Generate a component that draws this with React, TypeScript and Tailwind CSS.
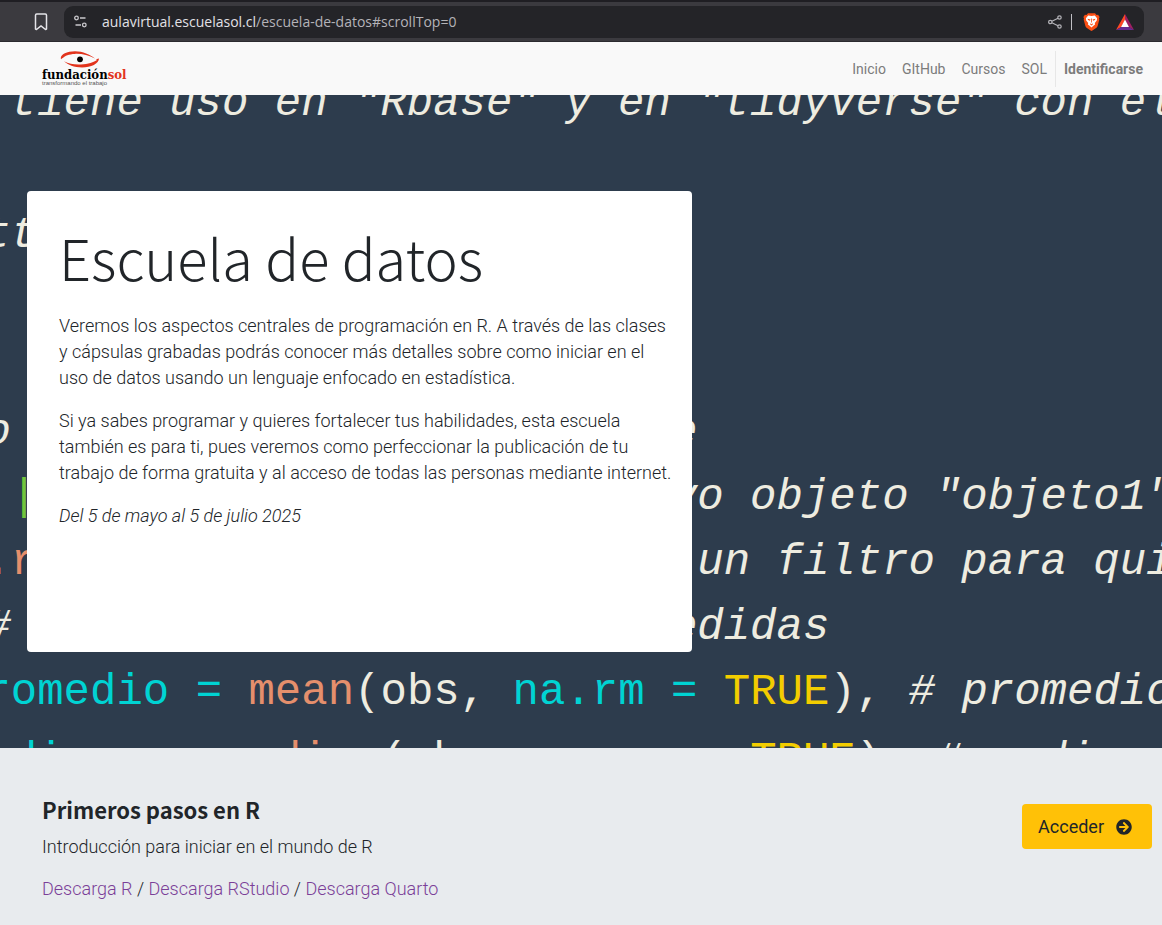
import type { ReactNode } from "react";
import { FaArrowCircleRight } from "react-icons/fa";

const navLinks = ["Inicio", "GItHub", "Cursos", "SOL"];

const downloads = ["Descarga R", "Descarga RStudio", "Descarga Quarto"];

function BrowserBar() {
  return (
    <div className="flex h-[42px] items-center border-t-2 border-b border-t-[#1f1e23] border-b-[#2b2a2f] bg-[#3b3a3f] pr-[18px] pl-[34px]">
      <button type="button" aria-label="Guardar marcador" className="mr-4 text-[#e4e3e8]">
        <svg width="14" height="18" viewBox="0 0 14 18" fill="none" stroke="currentColor" strokeWidth="1.5" strokeLinejoin="round">
          <path d="M1.5 2.2c0-.7.5-1.2 1.200-1.200h8.600c.7 0 1.200.5 1.200 1.200v13.800l-1 .5-4.500-3.600-4.500 3.600-1-.5z" />
        </svg>
      </button>
      <div className="flex h-8 min-w-0 flex-1 items-center rounded-[9px] bg-[#242428] px-[10px]">
        <button type="button" aria-label="Información del sitio" className="mr-[15px] text-[#c9c8cc]">
          <svg width="13" height="13" viewBox="0 0 13 13" fill="none" stroke="currentColor" strokeWidth="1.300">
            <circle cx="2.500" cy="3" r="1.800" />
            <path d="M6 3h5.500M1.500 10h5.500" />
            <circle cx="10.300" cy="10" r="1.800" />
          </svg>
        </button>
        <p className="min-w-0 flex-1 truncate font-['Open_Sans',sans-serif] text-[14px] leading-5 text-[#b4b3b8]">
          <span className="text-[#e2e1e6]">aulavirtual.escuelasol.cl</span>
          /escuela-de-datos#scrollTop=0
        </p>
        <button type="button" aria-label="Compartir" className="text-[#b4b3b8]">
          <svg width="14" height="14" viewBox="0 0 14 14" fill="none" stroke="currentColor" strokeWidth="1.200">
            <circle cx="2.300" cy="7" r="1.700" />
            <circle cx="11.500" cy="2.500" r="1.700" />
            <circle cx="11.500" cy="11.500" r="1.700" />
            <path d="M3.900 6.300 10 3.200M3.900 7.700l6.100 3.100" />
          </svg>
        </button>
        <span className="mx-[9px] h-4 w-px bg-[#c0bfc4]" />
        <button type="button" aria-label="Brave Shields" className="mx-[2px]">
          <svg width="17" height="18" viewBox="0 0 17 18">
            <path
              d="M5 .3h7l1.600 1.600 1.500-.1 1.500 2.200-.6 1.500.3 1.300-1.700 6.300c-.3 1-.8 1.500-1.500 2l-3.700 2.500c-.6.4-1.200.4-1.800 0l-3.700-2.500c-.7-.5-1.200-1-1.500-2L.7 6.800 1 5.500.4 4l1.500-2.200 1.500.1z"
              fill="#fb4f14"
            />
            <path
              d="M5.200 2.600 8.500 3l3.300-.4 2.300 2.600-.3 2.300-2 2.600.3 1.500-2 1.300-1.600 1.600-1.600-1.600-2-1.300.3-1.500-2-2.600-.3-2.300z"
              fill="#fff"
            />
            <path d="m4.600 5.800 2.900.7-.7 1.200-1.800-.8zM12.400 5.800l-2.900.7.7 1.200 1.800-.8zM7 10.300l1.500.9 1.500-.9-.4 1.500-1.100.7-1.100-.7zM8.100 5.500h.8v4h-.8z" fill="#fb4f14" />
          </svg>
        </button>
        <button type="button" aria-label="Brave Rewards" className="ml-[14px]">
          <svg width="18" height="16" viewBox="0 0 18 16">
            <path d="M9 0 0 16l5.200-3L9 6z" fill="#ff4724" />
            <path d="m9 0 9 16-5.200-3L9 6z" fill="#9e1f63" />
            <path d="M0 16h18l-5.200-3H5.200z" fill="#662d91" />
            <path d="m9 5.500 4 7.500H5z" fill="#ffffff" />
          </svg>
        </button>
      </div>
    </div>
  );
}

function Logo() {
  return (
    <a href="#inicio" aria-label="Fundación SOL" className="flex flex-col">
      <svg width="40" height="17" viewBox="0 0 40 17" className="ml-[18px]">
        <path d="M1 8.300C-.5 4 6 .2 15 .2c8 0 15 3.300 20 7.300C29 4.800 22 2.600 15 2.900 9 3 4.500 5 3.500 6.500 2.500 7 2 7.500 1 8.300z" fill="#e2341d" />
        <path d="M4 10.300c5 2.700 11 3.600 17 3.200 7-.4 13-2.200 16-4.500l-1-.8L39 7.500c0 5-8 9-17 9-8 0-14-2.600-18-6.200z" fill="#e2341d" />
        <circle cx="20" cy="8.300" r="2.900" fill="#000" />
      </svg>
      <span className="-mt-px font-['DejaVu_Serif_Condensed','DejaVu_Serif',serif] text-[13px] leading-4 font-bold text-black">
        fundación<span className="text-[#e2341d]">sol</span>
      </span>
      <span className="-mt-1 font-['Liberation_Sans',sans-serif] text-[6px] leading-2 text-[#555555]">
        transformando el trabajo
      </span>
    </a>
  );
}

function SiteNav() {
  return (
    <header className="flex h-[53px] items-center justify-between bg-[#f9f9f9] pr-[19px] pl-[42px]">
      <Logo />
      <nav className="flex items-center text-[14px] leading-5 text-[#7c7c7c]">
        <div className="flex gap-4 pr-2">
          {navLinks.map((label) => (
            <a key={label} href={`#${label.toLowerCase()}`}>
              {label}
            </a>
          ))}
        </div>
        <a href="#identificarse" className="border-l border-[#e7e7e7] py-2 pl-2 font-bold">
          Identificarse
        </a>
      </nav>
    </header>
  );
}

const Cyan = ({ children }: { children: ReactNode }) => <span className="text-[#00d3d3]">{children}</span>;
const Salmon = ({ children }: { children: ReactNode }) => <span className="text-[#e58f6c]">{children}</span>;
const Yellow = ({ children }: { children: ReactNode }) => <span className="text-[#f3cd00]">{children}</span>;

const Indent = () => <span className="inline-block w-[1ch]" />;
const Gap = () => <span className="inline-block w-[24ch]" />;

const introRows: ReactNode[] = [
  <>
    <Indent />
    <Indent />
    <i>tiene uso en "Rbase" y en "tidyverse" con el</i>
  </>,
  " ",
  <>
    <Indent />
    <i>tt</i>
  </>,
  " ",
  " ",
];

const filterRows: ReactNode[] = [
  <>
    <Indent />
    <i>o</i>
    <Gap />
    <Indent />
    <i>e</i>
  </>,
  <>
    <Indent />
    <Indent />
    <span className="text-[#72c63c]">|</span>
    <Gap />
    <i>vo objeto "objeto1"</i>
  </>,
  <>
    <Indent />
    <Salmon>.r</Salmon>
    <Gap />
    <Indent />
    <i>un filtro para quitar</i>
  </>,
  <>
    <Indent />
    <i>#</i>
    <Gap />
    <i>medidas</i>
  </>,
  <>
    <Cyan>{"promedio = "}</Cyan>
    <Salmon>mean</Salmon>
    {"(obs, "}
    <Cyan>{"na.rm = "}</Cyan>
    <Yellow>TRUE</Yellow>
    {"), "}
    <i># promedio</i>
  </>,
];

const lastRow: ReactNode = (
  <>
    <Cyan>{"mediana = "}</Cyan>
    <Salmon>median</Salmon>
    {"(obs, "}
    <Cyan>{"na.rm = "}</Cyan>
    <Yellow>TRUE</Yellow>
    {"), "}
    <i># mediana</i>
  </>
);

function CodeBackdrop() {
  return (
    <div aria-hidden="true" className="absolute inset-0 overflow-hidden">
      <div className="absolute -top-[25px] -left-[42px] font-['Liberation_Mono',monospace] text-[44px] whitespace-pre text-[#eeece0]">
        <div className="leading-[66px]">
          {introRows.map((row, index) => (
            <div key={index}>{row}</div>
          ))}
        </div>
        <div className="leading-[65px]">
          {filterRows.map((row, index) => (
            <div key={index}>{row}</div>
          ))}
        </div>
        <div className="leading-[71px]">{lastRow}</div>
      </div>
    </div>
  );
}

function Hero() {
  return (
    <section className="relative bg-[#2d3c4d] px-[27px] py-24">
      <CodeBackdrop />
      <div className="relative min-h-[461px] w-full max-w-[665px] rounded bg-white pt-7 pr-5 pl-8 text-[18px] leading-[26px] font-light">
        <h1 className="font-['Noto_Sans_CJK_JP',sans-serif] text-[56px] leading-[76px] font-light">Escuela de datos</h1>
        <p className="mt-[18px]">
          Veremos los aspectos centrales de programación en R. A través de las clases
          <br />
          y cápsulas grabadas podrás conocer más detalles sobre como iniciar en el
          <br />
          uso de datos usando un lenguaje enfocado en estadística.
        </p>
        <p className="mt-[17px]">
          Si ya sabes programar y quieres fortalecer tus habilidades, esta escuela
          <br />
          también es para ti, pues veremos como perfeccionar la publicación de tu
          <br />
          trabajo de forma gratuita y al acceso de todas las personas mediante internet.
        </p>
        <p className="mt-[17px] italic">Del 5 de mayo al 5 de julio 2025</p>
      </div>
    </section>
  );
}

function FirstSteps() {
  return (
    <section className="flex flex-1 items-start justify-between bg-[#e8ebee] pt-[46px] pr-[10px] pb-[22px] pl-[42px]">
      <div className="text-[18px] leading-[26px] font-light">
        <h2 className="font-['Noto_Sans_CJK_JP',sans-serif] text-[22px] leading-[30px] font-bold">Primeros pasos en R</h2>
        <p className="mt-[10px]">Introducción para iniciar en el mundo de R</p>
        <p className="mt-4">
          {downloads.map((label, index) => (
            <span key={label}>
              {index > 0 && " / "}
              <a href="#descargas" className="text-[#7b3f98]">
                {label}
              </a>
            </span>
          ))}
        </p>
      </div>
      <a
        href="#acceder"
        className="mt-[10px] flex h-[45px] items-center gap-3 rounded bg-[#ffc107] pr-5 pl-4 text-[18px] leading-[26px]"
      >
        Acceder
        <FaArrowCircleRight size={16} />
      </a>
    </section>
  );
}

export default function App() {
  return (
    <div className="flex min-h-screen flex-col bg-white font-['Roboto',sans-serif] text-[#212529]">
      <BrowserBar />
      <SiteNav />
      <main className="flex flex-1 flex-col">
        <Hero />
        <FirstSteps />
      </main>
    </div>
  );
}
